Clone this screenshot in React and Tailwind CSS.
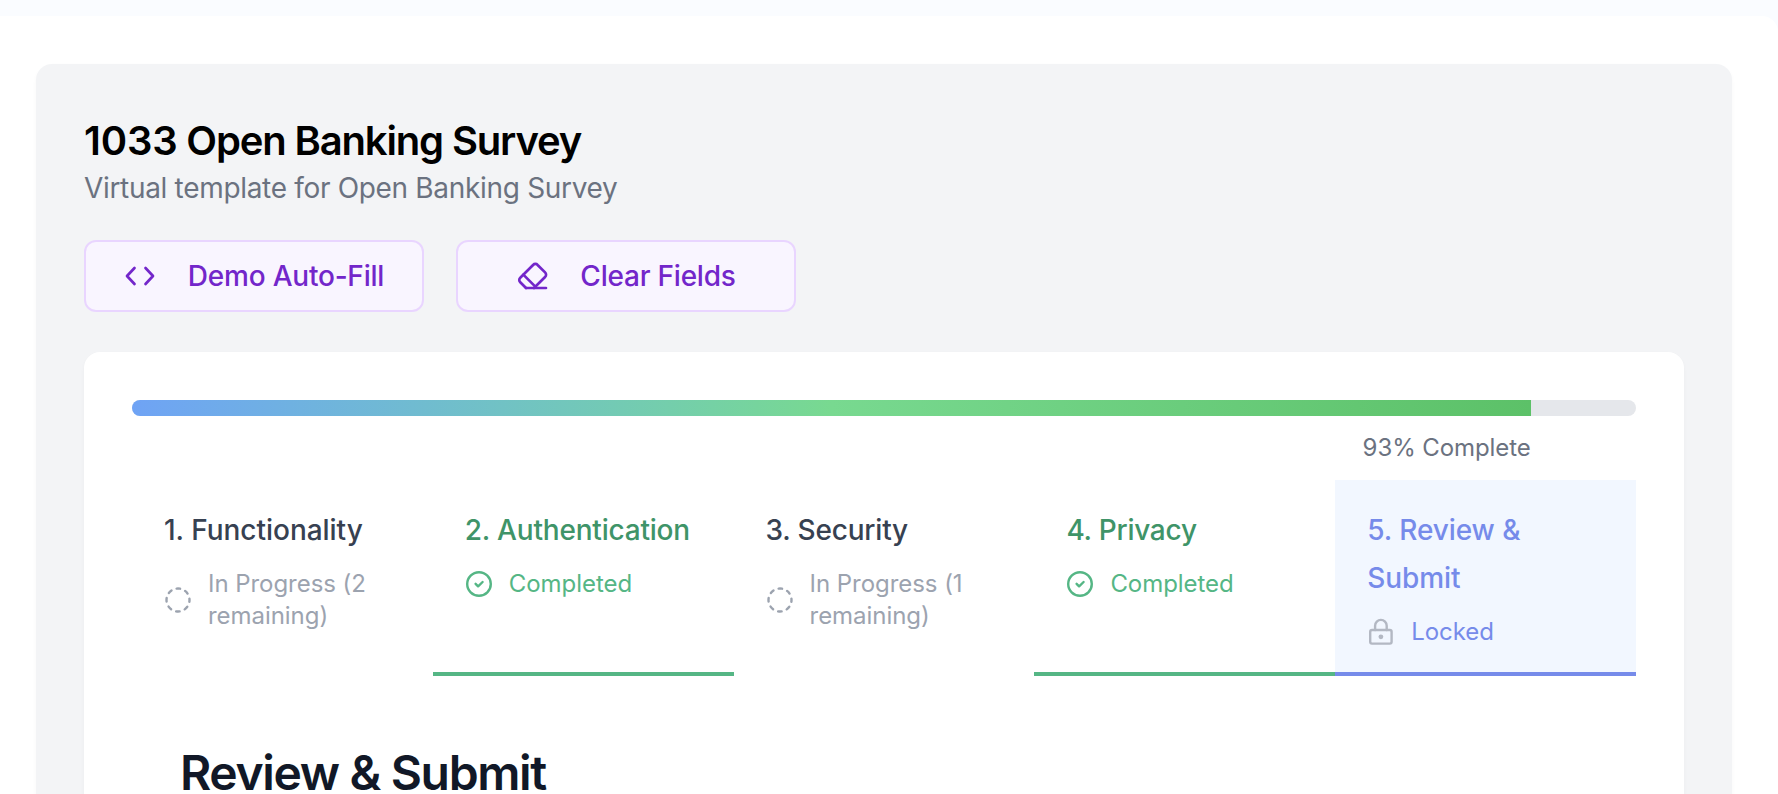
import React from "react";

function CodeIcon() {
  return (
    <svg className="size-8 shrink-0" viewBox="0 0 32 32" fill="none" stroke="currentColor" strokeWidth="2.7" strokeLinecap="round" strokeLinejoin="round">
      <path d="M10.5 8 3 16l7.5 8M21.5 8l7.5 8-7.5 8" />
    </svg>
  );
}

function EraserIcon() {
  return (
    <svg className="size-8 shrink-0" viewBox="-0.5 0 24 24" fill="none" stroke="currentColor" strokeWidth="2" strokeLinecap="round" strokeLinejoin="round">
      <path d="m7 21-4.3-4.3c-1-1-1-2.5 0-3.4l9.6-9.6c1-1 2.5-1 3.4 0l5.6 5.6c1 1 1 2.5 0 3.4L13 21" />
      <path d="M22 21H7" />
      <path d="m5 11 9 9" />
    </svg>
  );
}

function ProgressIcon() {
  return (
    <svg className="size-7 shrink-0 text-[#9ca3af]" viewBox="0 0 28 28" fill="none" stroke="currentColor" strokeWidth="2.4" strokeLinecap="round">
      <circle cx="14" cy="14" r="11.5" strokeDasharray="3.6 5.432" strokeDashoffset="1.8" />
    </svg>
  );
}

function CheckIcon() {
  return (
    <svg className="size-7 shrink-0" viewBox="0 0 28 28" fill="none" stroke="currentColor" strokeWidth="2.4" strokeLinecap="round" strokeLinejoin="round">
      <circle cx="14" cy="14" r="11.8" />
      <path d="m10.6 13.8 2.5 2.5 4.5-4.3" />
    </svg>
  );
}

function LockIcon() {
  return (
    <svg className="size-7 shrink-0 text-[#b3b8c3]" viewBox="0 0 28 28" fill="none" stroke="currentColor" strokeWidth="2.4" strokeLinecap="round" strokeLinejoin="round">
      <rect x="3.2" y="12" width="21.4" height="13.6" rx="1.8" />
      <path d="M8.1 12V7.7a5.8 5.8 0 0 1 11.6 0V12" />
      <circle cx="13.9" cy="18.8" r="2.4" fill="currentColor" stroke="none" />
    </svg>
  );
}

const steps = [
  { title: "1. Functionality", status: "In Progress (2 remaining)", state: "progress", tracking: "tracking-[-0.03px]" },
  { title: "2. Authentication", status: "Completed", state: "done", tracking: "tracking-[-0.2px]" },
  { title: "3. Security", status: "In Progress (1 remaining)", state: "progress", tracking: "tracking-[-0.2px]" },
  { title: "4. Privacy", status: "Completed", state: "done", tracking: "tracking-[-0.25px]" },
  { title: "5. Review & Submit", status: "Locked", state: "locked", tracking: "tracking-[-0.08px]" },
];

const looks = {
  progress: { tab: "border-transparent", title: "text-[#374151]", status: "text-[#9ca3af]", Icon: ProgressIcon },
  done: { tab: "border-[#55b685]", title: "text-[#3f9468]", status: "text-[#55b685]", Icon: CheckIcon },
  locked: { tab: "border-[#768bea] bg-[#f2f7ff]", title: "text-[#768bea]", status: "text-[#768bea]", Icon: LockIcon },
};

function Step({ title, status, state, tracking }) {
  const { tab, title: titleColor, status: statusColor, Icon } = looks[state];
  return (
    <div className={`border-b-4 px-8 pt-[26px] pb-5 ${tab}`}>
      <div className={`text-[28px] leading-[48px] font-medium ${tracking} ${titleColor}`}>{title}</div>
      <div className={`mt-3.5 flex items-center gap-4 text-[24px] leading-8 tracking-[-0.05px] ${statusColor}`}>
        <Icon />
        <span>{status}</span>
      </div>
    </div>
  );
}

function DemoButton({ icon, children }) {
  return (
    <button className="flex h-[72px] w-[340px] items-center justify-center gap-8 rounded-xl border-2 border-[#e9d5ff] bg-[#f9f5ff] text-[28px] font-medium tracking-[-0.22px] text-[#7326ca]">
      {icon}
      <span>{children}</span>
    </button>
  );
}

export default function App() {
  return (
    <div className="h-[794px] overflow-hidden bg-[#fafcff] pt-4 font-['Inter',sans-serif]">
      <div className="h-[900px] rounded-tr-2xl bg-white pt-12 pr-[46px] pl-9">
        <div className="h-full rounded-2xl bg-[#f3f4f6] px-12 pt-[52px] shadow-[0_2px_4px_rgba(0,0,0,0.03)]">
          <h1 className="text-[40px] leading-[50px] font-semibold tracking-[-1.15px] text-black"><span className="tracking-[-0.2px]">1033</span> Open Banking Survey</h1>
          <p className="text-[28px] leading-[44px] tracking-[-0.32px] text-[#6b7280]">Virtual template for Open Banking Survey</p>
          <div className="mt-[30px] flex gap-8">
            <DemoButton icon={<CodeIcon />}>Demo Auto-Fill</DemoButton>
            <DemoButton icon={<EraserIcon />}>Clear Fields</DemoButton>
          </div>
          <div className="mt-10 h-[600px] rounded-2xl bg-white px-12 pt-12 shadow-[0_2px_4px_rgba(0,0,0,0.03)]">
            <div className="h-4 overflow-hidden rounded-full bg-[#e5e7eb]">
              <div className="h-full w-[93%] bg-linear-to-r from-[#6fa3f5] via-[#78d990] to-[#5cc168]" />
            </div>
            <div className="flex h-16 w-[93%] items-center justify-end text-[24px] tracking-[-0.08px] text-[#6b7280]">93% Complete</div>
            <div className="grid h-[196px] grid-cols-5">
              {steps.map((s) => <Step key={s.title} {...s} />)}
            </div>
            <h2 className="mt-[67px] pl-12 text-[48px] leading-[60px] font-semibold tracking-[-1.35px] text-[#111827]">Review &amp; Submit</h2>
          </div>
        </div>
      </div>
    </div>
  );
}
